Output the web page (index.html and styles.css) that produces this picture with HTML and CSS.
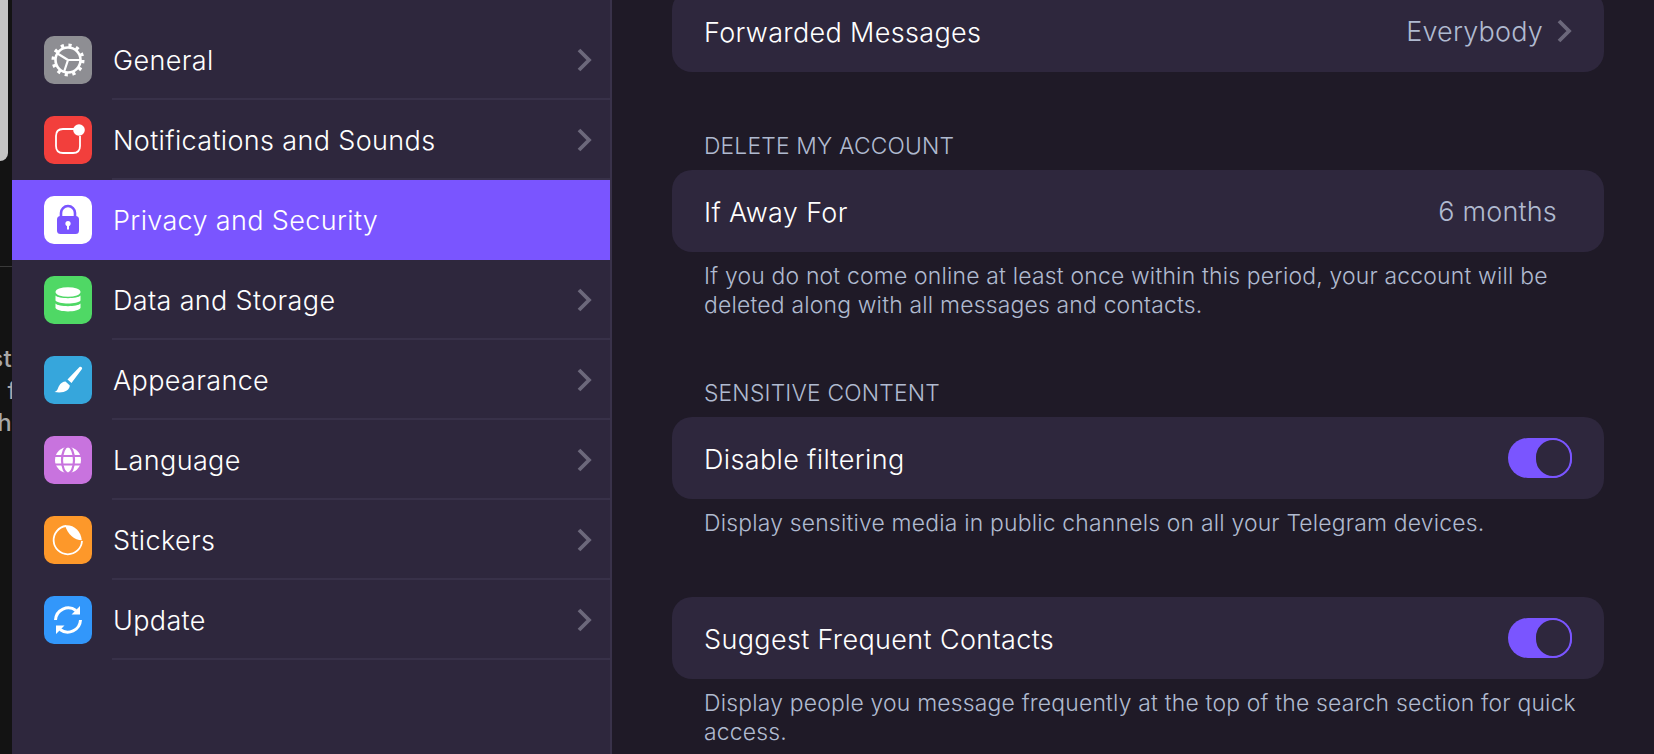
FILE: index.html
```html
<!DOCTYPE html>
<html lang="en">
<head>
    <meta charset="UTF-8">
    <title>Settings</title>
    <link rel="stylesheet" href="styles.css">
</head>
<body>
    <div class="backdrop">
        <div class="backdrop-panel"></div>
        <div class="backdrop-text">
            <div>st</div>
            <div class="cut">f</div>
            <div>h</div>
        </div>
    </div>

    <nav class="sidebar">
        <div class="nav-row">
            <span class="nav-icon gray">
                <svg viewBox="0 0 48 48" fill="none" stroke="#fff">
                    <circle cx="24" cy="24" r="12.5" stroke-width="2.6"/>
                    <circle cx="24" cy="24" r="14.8" stroke-width="3.4" stroke-dasharray="3.2 4.55"/>
                    <path d="M24 24 L13.5 17.5 M24 24 L36 24 M24 24 L20 36" stroke-width="2.2"/>
                </svg>
            </span>
            <span class="nav-label">General</span>
            <svg class="chevron" viewBox="0 0 16 24"><path d="M3 2 L13 12 L3 22"/></svg>
        </div>
        <div class="nav-row">
            <span class="nav-icon red">
                <svg viewBox="0 0 48 48" fill="none" stroke="#fff">
                    <path d="M30 13 H19 Q12 13 12 20 V30 Q12 37 19 37 H29 Q36 37 36 30 V20" stroke-width="1.8"/>
                    <circle cx="35" cy="14" r="5.8" fill="#fff" stroke="none"/>
                </svg>
            </span>
            <span class="nav-label">Notifications and Sounds</span>
            <svg class="chevron" viewBox="0 0 16 24"><path d="M3 2 L13 12 L3 22"/></svg>
        </div>
        <div class="nav-row active">
            <span class="nav-icon white">
                <svg viewBox="0 0 48 48">
                    <path d="M17 22 V17 A7 7 0 0 1 31 17 V22" fill="none" stroke="#7a55ff" stroke-width="2.6"/>
                    <rect x="13" y="20" width="22" height="18" rx="3.5" fill="#7a55ff"/>
                    <circle cx="24" cy="27.5" r="2.6" fill="#fff"/>
                    <rect x="23" y="28" width="2" height="5.5" fill="#fff"/>
                </svg>
            </span>
            <span class="nav-label">Privacy and Security</span>
        </div>
        <div class="nav-row">
            <span class="nav-icon green">
                <svg viewBox="0 0 48 48" fill="#fff">
                    <ellipse cx="24" cy="16" rx="12.5" ry="4.8"/>
                    <path d="M11.5 19.5 C14 23 34 23 36.5 19.5 V24.5 C34 28.5 14 28.5 11.5 24.5 Z"/>
                    <path d="M11.5 27.5 C14 31 34 31 36.5 27.5 V32 C34 36.5 14 36.5 11.5 32 Z"/>
                </svg>
            </span>
            <span class="nav-label">Data and Storage</span>
            <svg class="chevron" viewBox="0 0 16 24"><path d="M3 2 L13 12 L3 22"/></svg>
        </div>
        <div class="nav-row">
            <span class="nav-icon blue">
                <svg viewBox="0 0 48 48" fill="#fff">
                    <path d="M35.5 11 C37 9.8 39 11.8 37.8 13.3 L27.5 27 L23.5 23.5 Z"/>
                    <path d="M21.5 25.5 L25.8 29.5 C25.5 34.5 20 37.5 10.5 36 C13.5 35 13.5 33 15 30 C16.5 27 19 25.5 21.5 25.5 Z"/>
                </svg>
            </span>
            <span class="nav-label">Appearance</span>
            <svg class="chevron" viewBox="0 0 16 24"><path d="M3 2 L13 12 L3 22"/></svg>
        </div>
        <div class="nav-row">
            <span class="nav-icon purple">
                <svg viewBox="0 0 48 48" fill="#fff">
                    <circle cx="24" cy="24" r="13"/>
                    <g fill="none" stroke="#c873de" stroke-width="2.2">
                        <ellipse cx="24" cy="24" rx="6" ry="13.5"/>
                        <path d="M9 20 H39 M9 28.5 H39"/>
                    </g>
                </svg>
            </span>
            <span class="nav-label">Language</span>
            <svg class="chevron" viewBox="0 0 16 24"><path d="M3 2 L13 12 L3 22"/></svg>
        </div>
        <div class="nav-row">
            <span class="nav-icon orange">
                <svg viewBox="0 0 48 48" fill="none" stroke="#fff">
                    <path d="M22 10 A14.2 14.2 0 1 0 38 25" stroke-width="1.8"/>
                    <path d="M21 9.3 C30 8.5 37 15 37.8 24.3 C30.5 24 24 19 21 9.3 Z" fill="#fff" stroke="none"/>
                </svg>
            </span>
            <span class="nav-label">Stickers</span>
            <svg class="chevron" viewBox="0 0 16 24"><path d="M3 2 L13 12 L3 22"/></svg>
        </div>
        <div class="nav-row">
            <span class="nav-icon sky">
                <svg viewBox="0 0 48 48" fill="none" stroke="#fff" stroke-width="3">
                    <path d="M11.5 24 A12.8 12.8 0 0 1 32 14.5"/>
                    <path d="M36.5 24 A12.8 12.8 0 0 1 16 33.5"/>
                    <path d="M36 10 V18.5 H27.5 Z M12 38 V29.5 H20.5 Z" fill="#fff" stroke="none"/>
                </svg>
            </span>
            <span class="nav-label">Update</span>
            <svg class="chevron" viewBox="0 0 16 24"><path d="M3 2 L13 12 L3 22"/></svg>
        </div>
    </nav>

    <main class="content">
        <div class="card">
            <span class="card-label">Forwarded Messages</span>
            <span class="value">Everybody
                <svg class="chevron" viewBox="0 0 16 24"><path d="M3 2 L13 12 L3 22"/></svg>
            </span>
        </div>

        <h2 class="section-title first">DELETE MY ACCOUNT</h2>
        <div class="card">
            <span class="card-label">If Away For</span>
            <span class="value no-arrow">6 months</span>
        </div>
        <p class="note">If you do not come online at least once within this period, your account will be deleted along with all messages and contacts.</p>

        <h2 class="section-title">SENSITIVE CONTENT</h2>
        <div class="card">
            <span class="card-label">Disable filtering</span>
            <span class="toggle"></span>
        </div>
        <p class="note">Display sensitive media in public channels on all your Telegram devices.</p>

        <div class="card spaced">
            <span class="card-label">Suggest Frequent Contacts</span>
            <span class="toggle"></span>
        </div>
        <p class="note">Display people you message frequently at the top of the search section for quick access.</p>
    </main>
</body>
</html>
```

FILE: styles.css
```css
:root {
    --bg-color: #1f1a27;
    --panel-color: #2e273d;
    --line-color: #383149;
    --accent-color: #7a55ff;
    --muted-color: #b0bad0;
    --arrow-color: #6c687b;
}

html, body {
    height: 100%;
}

body {
    margin: 0;
    height: 754px;
    overflow: hidden;
    display: flex;
    font-family: Inter, "Noto Sans", sans-serif;
    font-size: 27px;
    font-weight: 350;
    letter-spacing: 0.35px;
    color: #ffffff;
    background-color: var(--bg-color);
}

/* window sticking out behind the app */
.backdrop {
    width: 12px;
    flex-shrink: 0;
    overflow: hidden;
    background-color: #131313;
}
.backdrop-panel {
    width: 8px;
    height: 161px;
    background-color: #c4c4c4;
    border-bottom-right-radius: 8px;
}
.backdrop-text {
    width: 12px;
    margin-top: 105px;
    padding-top: 76px;
    border-top: 1px solid #3a3a3a;
    direction: rtl;
    white-space: nowrap;
    font-size: 24px;
    font-weight: 500;
    line-height: 32px;
    color: #a8a8a8;
}
.backdrop-text .cut {
    margin-right: -5px;
}

.sidebar {
    width: 598px;
    flex-shrink: 0;
    padding-top: 20px;
    background-color: var(--panel-color);
    border-right: 2px solid #39324a;
    box-sizing: content-box;
}
.nav-row {
    height: 80px;
    display: flex;
    align-items: center;
    padding-left: 32px;
    padding-right: 18px;
    position: relative;
}
.nav-row::after {
    content: "";
    position: absolute;
    left: 100px;
    right: 0;
    bottom: 0;
    height: 2px;
    background-color: var(--line-color);
}
.nav-row.active {
    background-color: var(--accent-color);
}
.nav-row.active::after {
    display: none;
}
.nav-icon {
    width: 48px;
    height: 48px;
    border-radius: 10px;
    flex-shrink: 0;
    display: block;
}
.nav-icon svg {
    display: block;
    width: 48px;
    height: 48px;
}
.nav-icon.gray { background-color: #8e8e93; }
.nav-icon.red { background-color: #f23f3c; }
.nav-icon.white { background-color: #ffffff; }
.nav-icon.green { background-color: #4fd865; }
.nav-icon.blue { background-color: #36a6dc; }
.nav-icon.purple { background-color: #c873de; }
.nav-icon.orange { background-color: #fd982a; }
.nav-icon.sky { background-color: #3297fb; }
.nav-label {
    margin-left: 21px;
    padding-top: 1px;
    flex: 1;
}
.chevron {
    width: 16px;
    height: 24px;
    flex-shrink: 0;
    fill: none;
    stroke: var(--arrow-color);
    stroke-width: 3.8;
}

.content {
    width: 932px;
    margin-top: -10px;
    margin-left: 60px;
}
.card {
    height: 82px;
    box-sizing: border-box;
    padding: 0 32px;
    display: flex;
    align-items: center;
    justify-content: space-between;
    background-color: var(--panel-color);
    border-radius: 20px;
}
.card.spaced {
    margin-top: 59px;
}
.card-label {
    padding-top: 2px;
}
.value {
    display: flex;
    align-items: center;
    gap: 13px;
    letter-spacing: 0.2px;
    color: var(--muted-color);
}
.value.no-arrow {
    margin-right: 15px;
}
.section-title {
    margin: 58px 0 0 0;
    padding: 0 32px 9px 32px;
    font-size: 22.8px;
    font-weight: 350;
    line-height: 30px;
    letter-spacing: 0.2px;
    color: var(--muted-color);
}
.section-title.first {
    margin-top: 59px;
}
.note {
    margin: 10px 0 0 0;
    padding: 0 16px 0 32px;
    font-size: 22.9px;
    line-height: 29px;
    letter-spacing: 0.2px;
    color: var(--muted-color);
}
.toggle {
    width: 64px;
    height: 40px;
    box-sizing: border-box;
    border-radius: 20px;
    background-color: var(--accent-color);
    display: flex;
    justify-content: flex-end;
}
.toggle::after {
    content: "";
    width: 38px;
    height: 40px;
    box-sizing: border-box;
    border-radius: 20px;
    background-color: var(--panel-color);
    border: 2px solid var(--accent-color);
}
```
